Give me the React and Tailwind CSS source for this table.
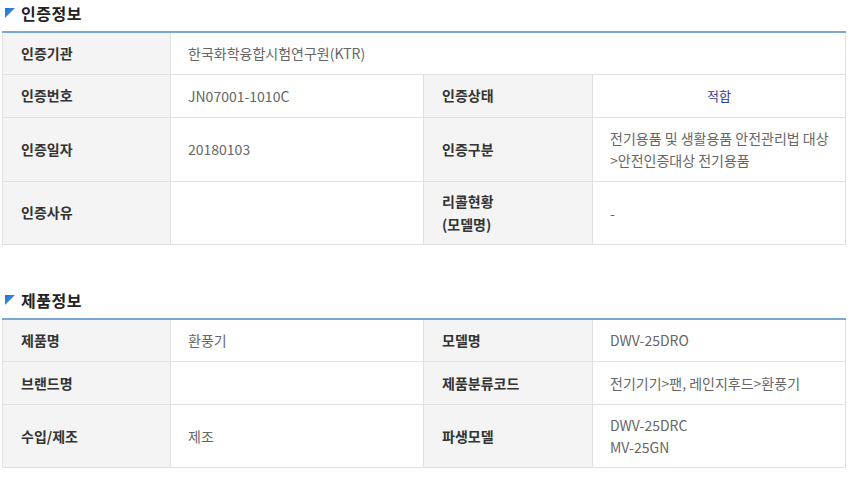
import React from 'react';

const cert = [
  { h: 'h-[42px]', cells: [['인증기관'], ['한국화학융합시험연구원(KTR)', 3]] },
  { h: 'h-[43px]', cells: [['인증번호'], ['JN07001-1010C'], ['인증상태'], ['적합', 1, 'status']] },
  { h: 'h-[64px]', cells: [['인증일자'], ['20180103'], ['인증구분'], ['전기용품 및 생활용품 안전관리법 대상\n>안전인증대상 전기용품']] },
  { h: 'h-[63px]', cells: [['인증사유'], [''], ['리콜현황\n(모델명)'], ['-']] },
];

const product = [
  { h: 'h-[43px]', cells: [['제품명'], ['환풍기'], ['모델명'], ['DWV-25DRO']] },
  { h: 'h-[43px]', cells: [['브랜드명'], [''], ['제품분류코드'], ['전기기기>팬, 레인지후드>환풍기']] },
  { h: 'h-[63px]', cells: [['수입/제조'], ['제조'], ['파생모델'], ['DWV-25DRC\nMV-25GN']] },
];

function Heading({ title }) {
  return (
    <div className="flex items-center gap-[6px] h-[26px] mb-[5px] pl-[3px]">
      <svg width="10" height="10" viewBox="0 0 10 10">
        <defs>
          <linearGradient id="tri" x1="0" y1="0" x2="1" y2="1">
            <stop offset="0" stopColor="#1e6fd0" />
            <stop offset="1" stopColor="#4da0e8" />
          </linearGradient>
        </defs>
        <polygon points="0,0 10,0 0,10" fill="url(#tri)" />
      </svg>
      <span className="text-[16px] font-bold text-[#222] tracking-[0.5px]">{title}</span>
    </div>
  );
}

function InfoTable({ rows }) {
  return (
    <table className="w-[843px] border-collapse table-fixed border-t-2 border-t-[#7aa6d2]">
      <colgroup>
        <col className="w-[168px]" />
        <col className="w-[253px]" />
        <col className="w-[169px]" />
        <col className="w-[253px]" />
      </colgroup>
      <tbody>
        {rows.map((row, i) => (
          <tr key={i} className={row.h}>
            {row.cells.map(([text, span, kind], j) => {
              const isLabel = j % 2 === 0;
              return (
                <td
                  key={j}
                  colSpan={span || 1}
                  className={
                    isLabel
                      ? 'border border-[#e2e2e2] bg-[#f4f4f4] pl-[18px] text-[14px] font-semibold text-[#333] leading-[23px] whitespace-pre-line'
                      : kind === 'status'
                      ? 'border border-[#e2e2e2] bg-white text-center text-[13px] text-[#2b3a9a] leading-[23px]'
                      : 'border border-[#e2e2e2] bg-white pl-[17px] text-[14px] text-[#666] leading-[22px] whitespace-pre-line'
                  }
                >
                  {text}
                </td>
              );
            })}
          </tr>
        ))}
      </tbody>
    </table>
  );
}

export default function App() {
  return (
    <div className="w-[860px] h-[494px] bg-white pl-[2px] font-['Noto_Sans_CJK_KR','Noto_Sans',sans-serif]">
      <Heading title="인증정보" />
      <InfoTable rows={cert} />
      <div className="h-[42px]" />
      <Heading title="제품정보" />
      <InfoTable rows={product} />
    </div>
  );
}
